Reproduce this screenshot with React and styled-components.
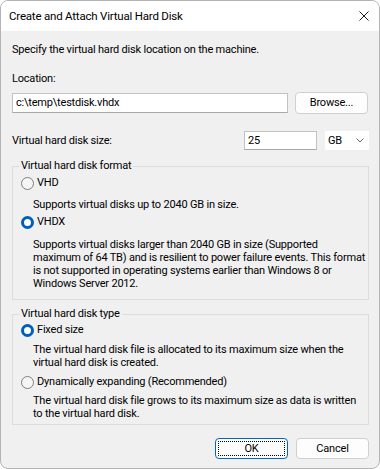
import styled, { createGlobalStyle } from "styled-components";

const GlobalStyle = createGlobalStyle`
  html, body {
    margin: 0;
    padding: 0;
    background: #ffffff;
  }
  body {
    font-family: Roboto, "Liberation Sans", Arial, sans-serif;
    font-size: 11px;
    letter-spacing: -0.2px;
    color: #000;
  }
  * {
    box-sizing: border-box;
  }
`;

const Window = styled.div`
  width: 380px;
  height: 469px;
  border: 1px solid #b4b4b4;
  border-radius: 8px;
  overflow: hidden;
  display: flex;
  flex-direction: column;
  background: #f0f0f0;
`;

const TitleBar = styled.div`
  height: 30px;
  flex-shrink: 0;
  background: #ffffff;
  display: flex;
  align-items: center;
  justify-content: space-between;
  padding: 0 10px 0 8px;
`;

const Title = styled.span`
  line-height: 14px;
  font-size: 11.5px;
`;

const Body = styled.div`
  flex: 1;
  padding: 12px 10px 0 11px;
  display: flex;
  flex-direction: column;
`;

const Label = styled.div`
  line-height: 14px;
  margin-top: ${(p) => p.$mt || 0}px;
  white-space: nowrap;
`;

const Row = styled.div`
  display: flex;
  align-items: center;
  gap: ${(p) => p.$gap || 7}px;
  margin-top: ${(p) => p.$mt || 0}px;
  height: ${(p) => p.$h}px;
`;

const TextInput = styled.div`
  width: ${(p) => p.$w}px;
  height: ${(p) => p.$h || 20}px;
  background: #ffffff;
  border: 1px solid #c2c2c2;
  border-bottom-color: #a8a8a8;
  display: flex;
  align-items: center;
  padding-left: 3px;
  line-height: 14px;
  margin-left: ${(p) => (p.$push ? "auto" : "0")};
`;

const Button = styled.div`
  width: 73px;
  height: ${(p) => p.$h || 21}px;
  background: #fdfdfd;
  border: 1px solid ${(p) => (p.$default ? "#0067c0" : "#d0d0d0")};
  border-radius: 4px;
  display: flex;
  align-items: center;
  justify-content: center;
  position: relative;
  line-height: 14px;

  ${(p) =>
    p.$default &&
    `
    &::after {
      content: "";
      position: absolute;
      inset: 2px;
      border: 1px dotted #000;
      border-radius: 1px;
    }
  `}
`;

const Select = styled.div`
  width: 44px;
  height: 19px;
  background: #ffffff;
  display: flex;
  align-items: center;
  justify-content: space-between;
  padding: 0 5px 0 3px;
  line-height: 14px;
`;

const Group = styled.fieldset`
  margin: ${(p) => p.$mt || 0}px 0 0 0;
  padding: 0 8px ${(p) => p.$pb || 0}px 8px;
  border: 1px solid #dcdcdc;
  min-inline-size: 0;
`;

const Legend = styled.legend`
  padding: 0 2px;
  margin-left: -2px;
  line-height: 14px;
`;

const RadioRow = styled.div`
  display: flex;
  align-items: center;
  gap: 3px;
  height: 14px;
  line-height: 14px;
  margin-top: ${(p) => p.$mt || 0}px;
`;

const RadioCircle = styled.span`
  width: 13px;
  height: 13px;
  border-radius: 50%;
  flex-shrink: 0;
  background: ${(p) => (p.$checked ? "#ffffff" : "#f5f5f5")};
  border: ${(p) => (p.$checked ? "3.5px solid #005fb8" : "1px solid #7f7f7f")};
`;

const Desc = styled.div`
  margin-left: 12px;
  margin-top: ${(p) => p.$mt || 0}px;
  line-height: 13px;
  white-space: nowrap;
`;

const Footer = styled.div`
  display: flex;
  justify-content: flex-end;
  gap: 8px;
  margin-top: 13px;
`;

function CloseIcon() {
  return (
    <svg width="10" height="10" viewBox="0 0 10 10">
      <path d="M0.5 0.5 L9.5 9.5 M9.5 0.5 L0.5 9.5" stroke="#1b1b1b" strokeWidth="1" />
    </svg>
  );
}

function Chevron() {
  return (
    <svg width="8" height="5" viewBox="0 0 8 5">
      <path d="M0.5 0.5 L4 4 L7.5 0.5" stroke="#666" strokeWidth="1" fill="none" />
    </svg>
  );
}

function Radio({ checked, label, mt }) {
  return (
    <RadioRow $mt={mt}>
      <RadioCircle $checked={checked} />
      <span>{label}</span>
    </RadioRow>
  );
}

export default function App() {
  return (
    <>
      <GlobalStyle />
      <Window>
        <TitleBar>
          <Title>Create and Attach Virtual Hard Disk</Title>
          <CloseIcon />
        </TitleBar>
        <Body>
          <Label>Specify the virtual hard disk location on the machine.</Label>
          <Label $mt={15}>Location:</Label>
          <Row $mt={6} $h={22}>
            <TextInput $w={276}>c:\temp\testdisk.vhdx</TextInput>
            <Button $h={22}>Browse...</Button>
          </Row>
          <Row $mt={17} $h={19} $gap={8}>
            <Label>Virtual hard disk size:</Label>
            <TextInput $w={73} $h={19} $push>25</TextInput>
            <Select>
              <span>GB</span>
              <Chevron />
            </Select>
          </Row>

          <Group $mt={9} $pb={9}>
            <Legend>Virtual hard disk format</Legend>
            <Radio label="VHD" mt={3} />
            <Desc $mt={8}>Supports virtual disks up to 2040 GB in size.</Desc>
            <Radio checked label="VHDX" mt={4} />
            <Desc $mt={9}>
              Supports virtual disks larger than 2040 GB in size (Supported
              <br />
              maximum of 64 TB) and is resilient to power failure events. This format
              <br />
              is not supported in operating systems earlier than Windows 8 or
              <br />
              Windows Server 2012.
            </Desc>
          </Group>

          <Group $mt={7} $pb={4}>
            <Legend>Virtual hard disk type</Legend>
            <Radio checked label="Fixed size" mt={2} />
            <Desc $mt={6}>
              The virtual hard disk file is allocated to its maximum size when the
              <br />
              virtual hard disk is created.
            </Desc>
            <Radio label="Dynamically expanding (Recommended)" mt={6} />
            <Desc $mt={5}>
              The virtual hard disk file grows to its maximum size as data is written
              <br />
              to the virtual hard disk.
            </Desc>
          </Group>

          <Footer>
            <Button $default>OK</Button>
            <Button>Cancel</Button>
          </Footer>
        </Body>
      </Window>
    </>
  );
}
